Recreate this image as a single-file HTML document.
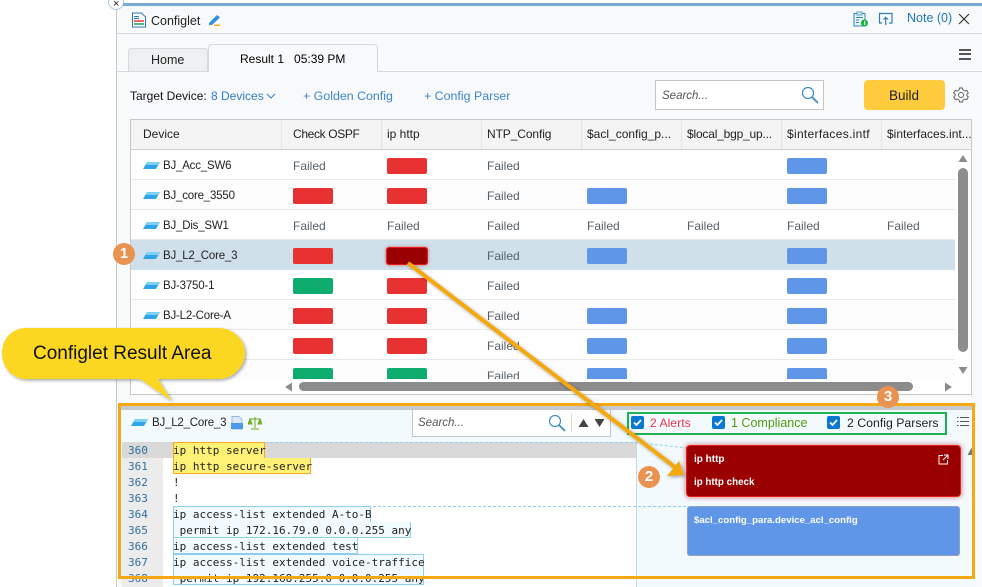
<!DOCTYPE html>
<html><head><meta charset="utf-8">
<style>
html,body{margin:0;padding:0;background:#fff}
#p{position:relative;width:982px;height:587px;overflow:hidden;background:#fff;font:12px "Liberation Sans",sans-serif;color:#222}
#p div,#p span.a,#p svg{position:absolute}
.t{white-space:nowrap;line-height:16px}
.d{font-size:11.5px;letter-spacing:-.2px}
.r{left:131px;width:824px;height:29px;border-bottom:1px solid #e8e8e8;background:#fff}
.f{color:#566069;white-space:nowrap;line-height:16px}
.b{width:40px;height:16px;border-radius:2px}
.red{background:#e83232}.gr{background:#0fac6f}.bl{background:#5f96e8}
.h{top:120px;height:29px;line-height:29px;border-left:1px solid #e6e6e6;padding-left:11px;white-space:nowrap;overflow:hidden;box-sizing:border-box}
.c{font:11px/16px "DejaVu Sans Mono","Liberation Mono",monospace;color:#222;white-space:pre;left:173px}
.n{font:11px/16px "DejaVu Sans Mono","Liberation Mono",monospace;color:#2f6f9f;left:128px}
.dev{left:143px;width:17px;height:8px}
</style></head><body><div id="p">

<!-- window -->
<div style="left:116px;top:3px;width:866px;height:584px;background:#f8f9fb"></div>
<div style="left:116px;top:3px;width:1px;height:584px;background:#ccc"></div>
<div style="left:116px;top:3px;width:866px;height:3px;background:#7aaad6"></div>
<div style="left:108px;top:-6px;width:14px;height:14px;border-radius:50%;background:#fff;border:1px solid #a9c6e2"></div>
<div class="t" style="left:113px;top:-4px;font-size:11px">×</div>
<div style="left:117px;top:33px;width:865px;height:1px;background:#d5d8dc"></div>

<!-- title -->
<svg style="left:131px;top:12px" width="16" height="16" viewBox="0 0 16 16"><path d="M1.500 1h9l4 4v10h-13z" fill="#fff" stroke="#2f77b8" stroke-width="1"/><rect x="3" y="8" width="10" height="2" fill="#e86a6a"/><rect x="3" y="11" width="10" height="2" fill="#4cba7a"/><rect x="3" y="4" width="5" height="1" fill="#2f77b8"/><rect x="3" y="6" width="5" height="1" fill="#2f77b8"/></svg>
<div class="t" style="left:151px;top:13px;font-size:12.500px;color:#222">Configlet</div>
<svg style="left:208px;top:13px" width="14" height="14" viewBox="0 0 14 14"><path d="M1 10L9 2l3 2.500-8 7.500H1z" fill="#2f8fe0"/><rect x="6" y="11.500" width="6" height="1.500" fill="#f5a623"/></svg>

<!-- top right icons -->
<svg style="left:853px;top:11px" width="16" height="17" viewBox="0 0 16 17"><rect x="1" y="2.500" width="11" height="12.500" fill="#e8f3fa" stroke="#2f86b8"/><rect x="4" y="1" width="5" height="3" fill="#fff" stroke="#2f86b8" stroke-width=".8"/><path d="M3 6.500h7M3 9h3M3 11.500h3" stroke="#2f86b8"/><circle cx="11.500" cy="12" r="3.500" fill="#12b53c"/><rect x="11" y="10" width="1.200" height="4" fill="#fff"/></svg>
<svg style="left:878px;top:12px" width="16" height="14" viewBox="0 0 16 14"><path d="M4 11H1.500V1.500h12.500V11H11" fill="none" stroke="#2f7fb4" stroke-width="1.200"/><path d="M7.700 13V5.500M5.500 7.500l2.200-2.200 2.200 2.200" fill="none" stroke="#2f7fb4" stroke-width="1.200"/></svg>
<div class="t" style="left:907px;top:10px;color:#1d78b8;font-size:12.500px">Note (0)</div>
<svg style="left:958px;top:13px" width="12" height="12" viewBox="0 0 12 12"><path d="M1 1l10 10M11 1L1 11" stroke="#333" stroke-width="1.200"/></svg>

<!-- tabs -->
<div style="left:117px;top:71px;width:865px;height:1px;background:#d5d8dc"></div>
<div style="left:128px;top:48px;width:80px;height:23px;background:#eef0f2;border:1px solid #d5d8dc;border-bottom:0;border-radius:4px 4px 0 0;box-sizing:border-box"></div>
<div class="t" style="left:151px;top:52px;color:#222;font-size:12.500px">Home</div>
<div style="left:208px;top:44px;width:170px;height:28px;background:#f8f9fb;border:1px solid #d5d8dc;border-bottom:0;border-radius:4px 4px 0 0;box-sizing:border-box"></div>
<div class="t" style="left:240px;top:51px;color:#000;font-size:12px">Result 1&nbsp;&nbsp; 05:39 PM</div>
<div style="left:959px;top:49px;width:12px;height:1.500px;background:#555"></div>
<div style="left:959px;top:53px;width:12px;height:1.500px;background:#555"></div>
<div style="left:959px;top:58px;width:12px;height:1.500px;background:#555"></div>

<!-- toolbar -->
<div class="t" style="left:130px;top:88px;color:#111;font-size:12px">Target Device:</div>
<div class="t" style="left:211px;top:88px;color:#2f7fc4;font-size:12px">8 Devices</div>
<svg style="left:266px;top:93px" width="10" height="6" viewBox="0 0 10 6"><path d="M1 1l4 4 4-4" fill="none" stroke="#2f7fc4"/></svg>
<div class="t" style="left:303px;top:88px;color:#3f86c8;font-size:12.400px">+ Golden Config</div>
<div class="t" style="left:424px;top:88px;color:#3f86c8;font-size:12.400px">+ Config Parser</div>
<div style="left:655px;top:80px;width:169px;height:30px;background:#fff;border:1px solid #c4c4c4;box-sizing:border-box"></div>
<div class="t" style="left:662px;top:88px;font-style:italic;color:#555;font-size:11.500px">Search...</div>
<svg style="left:801px;top:86px" width="18" height="18" viewBox="0 0 18 18"><circle cx="7" cy="7" r="5.500" fill="none" stroke="#3d8dc4" stroke-width="1.200"/><path d="M11 11l6 6" stroke="#3d8dc4" stroke-width="1.800"/></svg>
<div style="left:864px;top:80px;width:81px;height:30px;background:#fecb3d;border-radius:4px"></div>
<div class="t" style="left:889px;top:88px;color:#222;font-size:13.500px">Build</div>
<svg style="left:953px;top:87px" width="16" height="16" viewBox="0 0 16 16"><path d="M6.500 1h3l.5 2 1.800 1 2-.6 1.500 2.600-1.500 1.400v1.200l1.500 1.400-1.500 2.600-2-.6-1.800 1-.5 2h-3l-.5-2-1.800-1-2 .6L.7 10.000l1.500-1.400V7.400L.7 6l1.500-2.600 2 .6L6 3z" fill="none" stroke="#555" stroke-width=".9"/><circle cx="8" cy="8" r="2.500" fill="none" stroke="#555" stroke-width=".9"/></svg>

<!-- grid -->
<div style="left:130px;top:119px;width:842px;height:276px;background:#fff;border:1px solid #c8c8c8;box-sizing:border-box"></div>
<div style="left:131px;top:120px;width:840px;height:29px;background:#f4f4f4;border-bottom:1px solid #d0d0d0"></div>
<div class="t h" style="left:131px;width:150px;border-left:0;padding-left:12px;color:#222">Device</div>
<div class="t h" style="left:281px;width:100px;color:#222;letter-spacing:-.35px">Check OSPF</div>
<div class="t h" style="left:381px;width:100px;padding-left:5px;color:#222">ip http</div>
<div class="t h" style="left:481px;width:100px;padding-left:5px;color:#222;letter-spacing:-.1px">NTP_Config</div>
<div class="t h" style="left:581px;width:100px;padding-left:5px;color:#222">$acl_config_p...</div>
<div class="t h" style="left:681px;width:100px;padding-left:5px;color:#222;letter-spacing:-.2px">$local_bgp_up...</div>
<div class="t h" style="left:781px;width:100px;padding-left:5px;color:#222;letter-spacing:.3px">$interfaces.intf</div>
<div class="t h" style="left:881px;width:90px;padding-left:5px;color:#222">$interfaces.int...</div>

<div class="r" style="top:150px"></div>
<div class="r" style="top:180px;background:#fcfcfc"></div>
<div class="r" style="top:210px"></div>
<div class="r" style="top:240px;background:#cfe0ea;height:30px;border:0"></div>
<div class="r" style="top:270px"></div>
<div class="r" style="top:300px;background:#fcfcfc"></div>
<div class="r" style="top:330px"></div>
<div class="r" style="top:360px;height:19px;border:0;background:#fcfcfc"></div>

<!-- device icons -->
<svg class="dev" style="top:162px" viewBox="0 0 17 8"><path d="M4 0h13l-4 7H0z" fill="#2fa6ea"/><path d="M4 0h13l-2 3H2z" fill="#7fd0f7"/></svg>
<svg class="dev" style="top:192px" viewBox="0 0 17 8"><path d="M4 0h13l-4 7H0z" fill="#2fa6ea"/><path d="M4 0h13l-2 3H2z" fill="#7fd0f7"/></svg>
<svg class="dev" style="top:222px" viewBox="0 0 17 8"><path d="M4 0h13l-4 7H0z" fill="#2fa6ea"/><path d="M4 0h13l-2 3H2z" fill="#7fd0f7"/></svg>
<svg class="dev" style="top:252px" viewBox="0 0 17 8"><path d="M4 0h13l-4 7H0z" fill="#2fa6ea"/><path d="M4 0h13l-2 3H2z" fill="#7fd0f7"/></svg>
<svg class="dev" style="top:282px" viewBox="0 0 17 8"><path d="M4 0h13l-4 7H0z" fill="#2fa6ea"/><path d="M4 0h13l-2 3H2z" fill="#7fd0f7"/></svg>
<svg class="dev" style="top:312px" viewBox="0 0 17 8"><path d="M4 0h13l-4 7H0z" fill="#2fa6ea"/><path d="M4 0h13l-2 3H2z" fill="#7fd0f7"/></svg>

<div class="t d" style="left:163px;top:158px">BJ_Acc_SW6</div>
<div class="t d" style="left:163px;top:188px">BJ_core_3550</div>
<div class="t d" style="left:163px;top:218px">BJ_Dis_SW1</div>
<div class="t d" style="left:163px;top:248px">BJ_L2_Core_3</div>
<div class="t d" style="left:163px;top:278px">BJ-3750-1</div>
<div class="t d" style="left:163px;top:308px">BJ-L2-Core-A</div>

<!-- row 1 -->
<div class="f" style="left:293px;top:158px">Failed</div><div class="b red" style="left:387px;top:158px"></div><div class="f" style="left:487px;top:158px">Failed</div><div class="b bl" style="left:787px;top:158px"></div>
<!-- row 2 -->
<div class="b red" style="left:293px;top:188px"></div><div class="b red" style="left:387px;top:188px"></div><div class="f" style="left:487px;top:188px">Failed</div><div class="b bl" style="left:587px;top:188px"></div><div class="b bl" style="left:787px;top:188px"></div>
<!-- row 3 -->
<div class="f" style="left:293px;top:218px">Failed</div><div class="f" style="left:387px;top:218px">Failed</div><div class="f" style="left:487px;top:218px">Failed</div><div class="f" style="left:587px;top:218px">Failed</div><div class="f" style="left:687px;top:218px">Failed</div><div class="f" style="left:787px;top:218px">Failed</div><div class="f" style="left:887px;top:218px">Failed</div>
<!-- row 4 -->
<div class="b red" style="left:293px;top:248px"></div><div class="b" style="left:387px;top:248px;background:#9b0000;box-shadow:0 0 0 1px #f01818,0 0 3px 1px rgba(160,0,0,.5)"></div><div class="f" style="left:487px;top:248px">Failed</div><div class="b bl" style="left:587px;top:248px"></div><div class="b bl" style="left:787px;top:248px"></div>
<!-- row 5 -->
<div class="b gr" style="left:293px;top:278px"></div><div class="b red" style="left:387px;top:278px"></div><div class="f" style="left:487px;top:278px">Failed</div><div class="b bl" style="left:787px;top:278px"></div>
<!-- row 6 -->
<div class="b red" style="left:293px;top:308px"></div><div class="b red" style="left:387px;top:308px"></div><div class="f" style="left:487px;top:308px">Failed</div><div class="b bl" style="left:587px;top:308px"></div><div class="b bl" style="left:787px;top:308px"></div>
<!-- row 7 -->
<div class="b red" style="left:293px;top:338px"></div><div class="b red" style="left:387px;top:338px"></div><div class="f" style="left:487px;top:338px">Failed</div><div class="b bl" style="left:587px;top:338px"></div><div class="b bl" style="left:787px;top:338px"></div>
<!-- row 8 -->
<div class="b gr" style="left:293px;top:368px;height:11px;border-radius:2px 2px 0 0"></div><div class="b gr" style="left:387px;top:368px;height:11px;border-radius:2px 2px 0 0"></div><div class="f" style="left:487px;top:368px;height:11px;overflow:hidden">Failed</div><div class="b bl" style="left:587px;top:368px;height:11px;border-radius:2px 2px 0 0"></div><div class="b bl" style="left:787px;top:368px;height:11px;border-radius:2px 2px 0 0"></div>

<!-- grid scrollbars -->
<div style="left:955px;top:150px;width:16px;height:229px;background:#fff"></div>
<div style="left:958px;top:168px;width:10px;height:184px;background:#8c8c8c;border-radius:5px"></div>
<svg style="left:958px;top:155px" width="10" height="7"><path d="M5 0l4.500 7H.5z" fill="#8c8c8c"/></svg>
<svg style="left:958px;top:367px" width="10" height="7"><path d="M.5 0h9L5 7z" fill="#8c8c8c"/></svg>
<div style="left:131px;top:379px;width:840px;height:15px;background:#fff"></div>
<div style="left:299px;top:382px;width:614px;height:9px;background:#8c8c8c;border-radius:5px"></div>
<svg style="left:285px;top:382px" width="8" height="10"><path d="M0 5l7-4.500v9z" fill="#8c8c8c"/></svg>
<svg style="left:944px;top:382px" width="8" height="10"><path d="M1 .5l7 4.500-7 4.500z" fill="#8c8c8c"/></svg>

<!-- bottom panel -->
<div style="left:120px;top:404px;width:854px;height:183px;background:#f3fafe"></div>
<div style="left:120px;top:404px;width:854px;height:6px;background:#c4cacd"></div>
<svg class="dev" style="left:131px;top:419px" viewBox="0 0 17 8"><path d="M4 0h13l-4 7H0z" fill="#2fa6ea"/><path d="M4 0h13l-2 3H2z" fill="#7fd0f7"/></svg>
<div class="t d" style="left:152px;top:415px">BJ_L2_Core_3</div>
<svg style="left:231px;top:416px" width="12" height="14" viewBox="0 0 12 14"><path d="M1 .5h7l3 3v9.500H1z" fill="#dbe8f5" stroke="#9cb8d8"/><rect x="0" y="7" width="12" height="6" fill="#4a9be8"/></svg>
<svg style="left:248px;top:416px" width="14" height="14" viewBox="0 0 14 14"><path d="M7 1v11M3 13h8M2 3h10M2 3l-2 5h4zM12 3l-2 5h4z" fill="#7fbb30" stroke="#6aa820" stroke-width="1"/></svg>
<div style="left:412px;top:409px;width:199px;height:28px;background:#fff;border:1px solid #c4c4c4;box-sizing:border-box"></div>
<div class="t" style="left:418px;top:415px;font-style:italic;color:#555;font-size:11.500px">Search...</div>
<svg style="left:548px;top:414px" width="18" height="18" viewBox="0 0 18 18"><circle cx="7" cy="7" r="5.500" fill="none" stroke="#3d8dc4" stroke-width="1.200"/><path d="M11 11l6 6" stroke="#3d8dc4" stroke-width="1.800"/></svg>
<div style="left:571px;top:414px;width:1px;height:18px;background:#e8d8c0"></div>
<svg style="left:578px;top:419px" width="11" height="8"><path d="M5.500 0l5 8H.5z" fill="#444"/></svg>
<svg style="left:594px;top:419px" width="11" height="8"><path d="M.5 0h10l-5 8z" fill="#444"/></svg>

<!-- green filter box -->
<div style="left:627px;top:412px;width:320px;height:23px;border:2px solid #1fb153;box-sizing:border-box"></div>
<svg style="left:631px;top:416px" width="13" height="13" viewBox="0 0 13 13"><rect width="13" height="13" rx="2" fill="#0a78d2"/><path d="M3 6.500l2.500 2.500 4.500-5" fill="none" stroke="#fff" stroke-width="1.800"/></svg>
<div class="t" style="left:650px;top:415px;color:#e8344a;letter-spacing:.1px">2 Alerts</div>
<svg style="left:712px;top:416px" width="13" height="13" viewBox="0 0 13 13"><rect width="13" height="13" rx="2" fill="#0a78d2"/><path d="M3 6.500l2.500 2.500 4.500-5" fill="none" stroke="#fff" stroke-width="1.800"/></svg>
<div class="t" style="left:731px;top:415px;color:#4f9a10;font-size:12.500px">1 Compliance</div>
<svg style="left:827px;top:416px" width="13" height="13" viewBox="0 0 13 13"><rect width="13" height="13" rx="2" fill="#0a78d2"/><path d="M3 6.500l2.500 2.500 4.500-5" fill="none" stroke="#fff" stroke-width="1.800"/></svg>
<div class="t" style="left:847px;top:415px;color:#222;font-size:12.300px">2 Config Parsers</div>
<svg style="left:957px;top:416px" width="12" height="11" viewBox="0 0 12 11"><path d="M3 1.500h9M3 5.500h9M3 9.500h9M0 1.500h1.500M0 5.500h1.500M0 9.500h1.500" stroke="#555" stroke-width="1"/></svg>

<!-- code -->
<div style="left:122px;top:442px;width:41px;height:145px;background:#ececec"></div>
<div style="left:163px;top:442px;width:473px;height:145px;background:#fff"></div>
<div style="left:636px;top:442px;width:1px;height:145px;background:#c8d8e0"></div>
<div style="left:122px;top:442px;width:514px;height:16px;background:#d9d9d9"></div>
<svg style="left:173px;top:442px" width="515" height="70"><path d="M92 .5H463L514 6M0 64.500H514" fill="none" stroke="#8fd0ef" stroke-dasharray="3 2"/></svg>
<div style="left:173px;top:442px;width:92px;height:16px;background:#fff176;border:1px solid #f5a623;border-bottom:0;box-sizing:border-box"></div>
<div style="left:173px;top:458px;width:138px;height:16px;background:#fff176;border:1px solid #f5a623;border-top:0;box-sizing:border-box"></div>
<div style="left:173px;top:506px;width:198px;height:16px;background:#f1fafe;border:1px solid #8fcdea;border-bottom:0;box-sizing:border-box"></div>
<div style="left:173px;top:522px;width:238px;height:16px;background:#f1fafe;border:1px solid #8fcdea;border-top:0;box-sizing:border-box"></div>
<div style="left:173px;top:538px;width:185px;height:16px;background:#f1fafe;border-left:1px solid #8fcdea;border-right:1px solid #8fcdea;border-bottom:1px solid #8fcdea;box-sizing:border-box"></div>
<div style="left:173px;top:554px;width:251px;height:31px;background:#f1fafe;border:1px solid #8fcdea;box-sizing:border-box"></div>
<div class="n" style="top:443px">360</div>
<div class="n" style="top:459px">361</div>
<div class="n" style="top:475px">362</div>
<div class="n" style="top:491px">363</div>
<div class="n" style="top:507px">364</div>
<div class="n" style="top:523px">365</div>
<div class="n" style="top:539px">366</div>
<div class="n" style="top:555px">367</div>
<div class="n" style="top:571px">368</div>
<div class="c" style="top:443px">ip http server</div>
<div class="c" style="top:459px">ip http secure-server</div>
<div class="c" style="top:475px">!</div>
<div class="c" style="top:491px">!</div>
<div class="c" style="top:507px">ip access-list extended A-to-B</div>
<div class="c" style="top:523px"> permit ip 172.16.79.0 0.0.0.255 any</div>
<div class="c" style="top:539px">ip access-list extended test</div>
<div class="c" style="top:555px">ip access-list extended voice-traffice</div>
<div class="c" style="top:571px"> permit ip 192.168.255.0 0.0.0.255 any</div>

<!-- cards -->
<div style="left:687px;top:446px;width:273px;height:50px;background:#9b0000;border-radius:3px;box-shadow:0 0 0 1px #ee1c1c,0 0 5px 2px rgba(160,0,0,.4)"></div>
<div class="t" style="left:694px;top:452px;color:#fff;font-weight:bold;font-size:10px">ip http</div>
<svg style="left:938px;top:454px" width="11" height="11" viewBox="0 0 11 11"><path d="M5 1.500H1v8.500h8.500V6M6 1h4v4M10 1L5 6" fill="none" stroke="#fff" stroke-width="1"/></svg>
<div class="t" style="left:694px;top:475px;color:#fff;font-weight:bold;font-size:9.800px">ip http check</div>
<div style="left:687px;top:506px;width:273px;height:50px;background:#5f96e8;border-radius:3px;border:1px solid #8fa3bd;box-sizing:border-box"></div>
<div class="t" style="left:694px;top:513px;color:#fff;font-weight:bold;font-size:9.600px">$acl_config_para.device_acl_config</div>
<svg style="left:967px;top:448px" width="9" height="7"><path d="M4.500 0l4 7H.5z" fill="#777"/></svg>

<!-- orange frame -->
<div style="left:118px;top:403px;width:857px;height:176px;border:3px solid #f5a80f;box-sizing:border-box"></div>

<!-- arrow -->
<svg style="left:0;top:0" width="982" height="587">
<defs><filter id="s" x="-20%" y="-20%" width="140%" height="140%"><feDropShadow dx="1.500" dy="1.500" stdDeviation="1.500" flood-color="#000" flood-opacity=".35"/></filter></defs>
<g filter="url(#s)"><path d="M408 263L676 468" stroke="#f5a80f" stroke-width="4" fill="none"/><path d="M684 475l-17 1 12-15z" fill="#f5a80f"/></g>
<path d="M24 328H219C232 328 245 339 245 353S232 379 219 379H158L172 401L140 379H26C12 379 2 367 2 353S12 328 26 328Z" fill="#fbd723" filter="url(#s)"/>
</svg>
<div class="t" style="left:33px;top:343px;font-size:19px;line-height:22px;color:#111">Configlet Result Area</div>

<!-- badges -->
<div style="left:113px;top:243px;width:22px;height:22px;border-radius:50%;background:#ea9250;color:#fff;font:bold 15px/22px 'Liberation Sans',sans-serif;text-align:center">1</div>
<div style="left:638px;top:466px;width:22px;height:22px;border-radius:50%;background:#ea9250;color:#fff;font:bold 15px/22px 'Liberation Sans',sans-serif;text-align:center">2</div>
<div style="left:877px;top:386px;width:22px;height:22px;border-radius:50%;background:#ea9250;color:#fff;font:bold 15px/22px 'Liberation Sans',sans-serif;text-align:center">3</div>

</div></body></html>
